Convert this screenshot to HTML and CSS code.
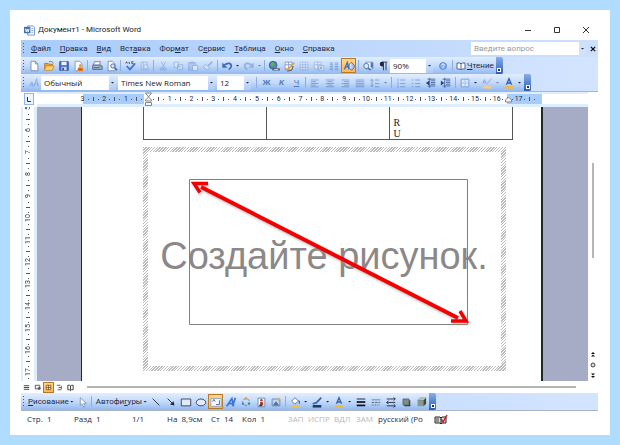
FILE: index.html
```html
<!DOCTYPE html>
<html lang="ru">
<head>
<meta charset="utf-8">
<title>Документ1 - Microsoft Word</title>
<link rel="stylesheet" href="styles.css">
</head>
<body>
<main class="window">
  <header class="title">
    <svg class="logo" viewBox="0 0 12 12"><path d="M4 1h6l1.500 1.500V11H4z" fill="#fff" stroke="#6d8fc9"/><path d="M8 4h2M8 6h2M8 8h2" stroke="#7f9fd6"/><path d="M0 2h7v7H0z" fill="#3f6fbd"/><path d="M1.500 4l1 3.500 1-3 1 3 1-3.500" fill="none" stroke="#fff"/></svg>
    <h1>Документ1 - Microsoft Word</h1>
    <div class="controls">
      <button aria-label="Свернуть"><svg viewBox="0 0 8 8"><path d="M1 4.500h6"/></svg></button>
      <button aria-label="Развернуть"><svg viewBox="0 0 8 8"><path d="M1.500 1.500h5v5h-5z"/></svg></button>
      <button aria-label="Закрыть"><svg viewBox="0 0 8 8"><path d="M1 1l6 6M7 1L1 7"/></svg></button>
    </div>
  </header>

  <nav class="menu">
    <i class="grip"></i>
    <button><u>Ф</u>айл</button><button><u>П</u>равка</button><button><u>В</u>ид</button><button>Вст<u>а</u>вка</button><button>Фор<u>м</u>ат</button><button>С<u>е</u>рвис</button><button><u>Т</u>аблица</button><button><u>О</u>кно</button><button><u>С</u>правка</button>
    <div class="ask"><input type="text" placeholder="Введите вопрос" aria-label="Введите вопрос"><button aria-label="Список вопросов"><i class="tri"></i></button></div>
    <button class="doc-close" aria-label="Закрыть окно"><svg viewBox="0 0 7 7"><path d="M1 1l5 5M6 1L1 6" stroke="#111" stroke-width="1.500"/></svg></button>
  </nav>

  <div class="dock">
    <div class="bar">
      <i class="grip"></i>
      <button class="ic" aria-label="Создать"><svg viewBox="0 0 14 14"><path d="M3.500 1.500h5l3 3v8h-8z" fill="#fff" stroke="#6e87b5"/><path d="M8.500 1.500v3h3" fill="none" stroke="#6e87b5"/></svg></button>
      <button class="ic" aria-label="Открыть"><svg viewBox="0 0 14 14"><path d="M2 4h4l1 1h4v6H2z" fill="#e9a336" stroke="#b3731c"/><path d="M1.500 12l2.500-5h9l-2.500 5z" fill="#ffdc7b" stroke="#c98a27"/><path d="M7 2c3-1 4 0 5 2" fill="none" stroke="#8d6d3a"/></svg></button>
      <button class="ic" aria-label="Сохранить"><svg viewBox="0 0 14 14"><path d="M2 2h10v10H2z" fill="#4d72c4" stroke="#2b4a94"/><path d="M4 2h6v4H4z" fill="#e8f0ff"/><path d="M4 8h6v4H4z" fill="#c5d4ef"/><path d="M5 9h2v3H5z" fill="#334f8f"/></svg></button>
      <button class="ic" aria-label="Разрешения"><svg viewBox="0 0 14 14"><path d="M2.500 1.500h5l3 3v8h-8z" fill="#fff" stroke="#7e93bd"/><path d="M5 13c0-4 1-5 3.500-5s3.500 1 4 5z" fill="#f2a22e"/><circle cx="8.500" cy="6.500" r="1.500" fill="#e08a2a"/><path d="M6 11h5" stroke="#d9382a" stroke-width="2"/></svg></button>
      <i class="sep"></i>
      <button class="ic" aria-label="Печать"><svg viewBox="0 0 14 14"><path d="M4 2h7l-1 4H3z" fill="#fff" stroke="#68789b"/><path d="M2 6h9l2 1v4H2z" fill="#a9b6d2" stroke="#4b5f8a"/><path d="M3 9h7" stroke="#45557c"/><path d="M10 8h2" stroke="#37a34a"/></svg></button>
      <button class="ic" aria-label="Просмотр"><svg viewBox="0 0 14 14"><path d="M2.500 1.500h5l3 3v8h-8z" fill="#fff" stroke="#7089b8"/><circle cx="8" cy="7" r="2.500" fill="#cfe2fb" stroke="#45608f"/><path d="M10 9l3 3" stroke="#45608f" stroke-width="1.500"/></svg></button>
      <i class="sep"></i>
      <button class="ic" aria-label="Орфография"><svg viewBox="0 0 14 14"><path d="M2 4l1-2 1 2M6 2v2h1M11 2H9v2h2" fill="none" stroke="#445"/><path d="M3 7l4 4 6-7" fill="none" stroke="#3b72d9" stroke-width="2"/></svg></button>
      <button class="ic off" aria-label="Справочник"><svg viewBox="0 0 14 14"><path d="M2.500 2.500h7v9h-7zM5 2v9" fill="#dce8fb" stroke="#718fc5"/><circle cx="8" cy="8" r="2.500" fill="#eaf2ff" stroke="#718fc5"/><path d="M10 10l2 2" stroke="#718fc5"/></svg></button>
      <i class="sep"></i>
      <button class="ic off" aria-label="Вырезать"><svg viewBox="0 0 14 14"><path d="M5 2l4 7M10 2L6 9" stroke="#5d80bd"/><circle cx="5" cy="10.500" r="1.500" fill="none" stroke="#5d80bd"/><circle cx="9" cy="10.500" r="1.500" fill="none" stroke="#5d80bd"/></svg></button>
      <button class="ic off" aria-label="Копировать"><svg viewBox="0 0 14 14"><path d="M2.500 2.500h5v6h-5zM6.500 5.500h6v6h-6z" fill="#eef5ff" stroke="#6485c2"/><path d="M8 7.500h3M8 9.500h3" stroke="#8aa5d6"/></svg></button>
      <button class="ic off" aria-label="Вставить"><svg viewBox="0 0 14 14"><path d="M2 3h8v9H2z" fill="#9bb6e3" stroke="#6485c2"/><path d="M4 2h4v2H4z" fill="#6485c2"/><path d="M6.500 6.500h6v6h-6z" fill="#fff" stroke="#6485c2"/></svg></button>
      <button class="ic off" aria-label="Формат по образцу"><svg viewBox="0 0 14 14"><path d="M12 2L7 7" stroke="#6485c2" stroke-width="2"/><path d="M4 5l5 4-3 3-4-4z" fill="#eef5ff" stroke="#6485c2"/></svg></button>
      <i class="sep wide"></i>
      <button class="ic" aria-label="Отменить"><svg viewBox="0 0 14 14"><path d="M4 6c3-3 8-3 8 1 0 2-1 3-3 4" fill="none" stroke="#3e6cc4" stroke-width="2"/><path d="M1.500 3v6h6z" fill="#3e6cc4"/></svg></button>
      <button class="drop" aria-label="Список отмены"><i class="tri"></i></button>
      <button class="ic off" aria-label="Вернуть"><svg viewBox="0 0 14 14"><path d="M10 6c-3-3-8-3-8 1 0 2 1 3 3 4" fill="none" stroke="#6485c2" stroke-width="2"/><path d="M12.500 3v6h-6z" fill="#6485c2"/></svg></button>
      <button class="drop off" aria-label="Список возврата"><i class="tri"></i></button>
      <i class="sep"></i>
      <button class="ic" aria-label="Гиперссылка"><svg viewBox="0 0 14 14"><circle cx="6" cy="6" r="4.500" fill="#4b82c9" stroke="#2d5592"/><path d="M3 4l3-2 2 3-3 3-2-2zM8 7l2-1-1 3z" fill="#62b25a"/><path d="M6 11h3M9 11h4" stroke="#555f70" stroke-width="2.500" stroke-linecap="round"/><path d="M7 11h5" stroke="#dde5f0"/></svg></button>
      <button class="ic" aria-label="Таблицы и границы"><svg viewBox="0 0 14 14"><path d="M2.500 2.500h8v9h-8zM2.500 5.500h8M6.500 2.500v9" fill="#fff" stroke="#8497ba"/><path d="M13 3L7 10l-4 1" fill="none" stroke="#e0a13b" stroke-width="2"/><path d="M12 7l-2 5-5 1" fill="none" stroke="#594737"/></svg></button>
      <button class="ic off" aria-label="Добавить таблицу"><svg viewBox="0 0 14 14"><path d="M2.500 2.500h9v9h-9zM2.500 5.500h9M2.500 8.500h9M5.500 2.500v9M8.500 2.500v9" fill="#fff" stroke="#7390c6"/></svg></button>
      <button class="ic off" aria-label="Лист Excel"><svg viewBox="0 0 14 14"><path d="M1.500 2.500h8v8h-8zM1.500 5.500h8M5.500 2.500v8M6.500 6.500h6v6h-6z" fill="#fff" stroke="#7390c6"/><path d="M8 8l3 3M11 8l-3 3" stroke="#5277bb"/></svg></button>
      <button class="ic off" aria-label="Колонки"><svg viewBox="0 0 14 14"><path d="M2 3.500h4M2 5.500h4M2 7.500h4M2 9.500h4M2 11.500h4M8 3.500h4M8 5.500h4M8 7.500h4M8 9.500h4M8 11.500h4" stroke="#2f5aa8"/></svg></button>
      <button class="ic on" aria-label="Панель рисования"><svg viewBox="0 0 14 14"><path d="M1.500 11L5 3l2 8M3 8h4" fill="none" stroke="#3670cf" stroke-width="1.500"/><path d="M7 5l3-2 3 3v3l-3 3-3-3z" fill="#a9c3ed" stroke="#4465a5"/><path d="M9 4v6" stroke="#fff"/></svg></button>
      <i class="sep wide"></i>
      <button class="ic" aria-label="Схема документа"><svg viewBox="0 0 14 14"><path d="M4.500 2.500h8v8h-8z" fill="#fff" stroke="#7490c0"/><path d="M10 3h3v6h-3z" fill="#5275b5"/><circle cx="5" cy="7" r="3" fill="#dce9fb" stroke="#4c6da8"/><path d="M7 9l3 3" stroke="#4c6da8" stroke-width="1.500"/></svg></button>
      <button class="ic" aria-label="Непечатаемые знаки"><svg viewBox="0 0 14 14"><path d="M7.500 3v9M10.500 3v9M6 2.500h6" stroke="#1b2433"/><path d="M7.500 2H6a2.500 2.500 0 0 0 0 5.500h1.500z" fill="#1b2433"/></svg></button>
      <div class="combo c-zoom"><select aria-label="Масштаб"><option>90%</option></select><i class="arr"><i class="tri"></i></i></div>
      <button class="ic" aria-label="Справка Word"><svg viewBox="0 0 14 14"><circle cx="7" cy="7" r="4" fill="#86aef0" stroke="#4c7fd6"/><path d="M5.500 6c0-2 3-2 3 0 0 1-1.500 1-1.500 2.500M7 9v1" fill="none" stroke="#fff"/></svg></button>
      <i class="sep wide"></i>
      <button class="txt"><svg viewBox="0 0 10 10"><path d="M1 2h3l1 1 1-1h3v6H6L5 9 4 8H1zM5 3v6" fill="#fff" stroke="#56688c"/></svg><span><u>Ч</u>тение</span></button>
      <button class="cap" aria-label="Параметры панели"><i></i></button>
    </div>

    <div class="bar">
      <i class="grip"></i>
      <button class="ic off" aria-label="Стили"><svg viewBox="0 0 14 14"><path d="M2 11l2.500-5L6 11M3 9h3M7 11l3-9 2 9M8 8h4" fill="none" stroke="#4a73bd"/></svg></button>
      <div class="combo c-style"><select aria-label="Стиль"><option>Обычный</option></select><i class="arr"><i class="tri"></i></i></div>
      <div class="combo c-font"><select aria-label="Шрифт"><option>Times New Roman</option></select><i class="arr"><i class="tri"></i></i></div>
      <div class="combo c-size"><select aria-label="Размер"><option>12</option></select><i class="arr"><i class="tri"></i></i></div>
      <i class="sep six"></i>
      <button class="ic letter"><b>Ж</b></button><button class="ic letter"><em>К</em></button><button class="ic letter"><u>Ч</u></button>
      <i class="sep"></i>
      <button class="ic off" aria-label="По левому краю"><svg viewBox="0 0 14 14"><path d="M2 3.500h9M2 5.500h6M2 7.500h9M2 9.500h6M2 11.500h9" stroke="#2f5aa8"/></svg></button>
      <button class="ic off" aria-label="По центру"><svg viewBox="0 0 14 14"><path d="M2 3.500h10M4 5.500h6M2 7.500h10M4 9.500h6M2 11.500h10" stroke="#2f5aa8"/></svg></button>
      <button class="ic off" aria-label="По правому краю"><svg viewBox="0 0 14 14"><path d="M3 3.500h9M6 5.500h6M3 7.500h9M6 9.500h6M3 11.500h9" stroke="#2f5aa8"/></svg></button>
      <button class="ic off" aria-label="По ширине"><svg viewBox="0 0 14 14"><path d="M2 3.500h10M2 5.500h10M2 7.500h10M2 9.500h10M2 11.500h10" stroke="#2f5aa8"/></svg></button>
      <button class="ic off" aria-label="Интервал"><svg viewBox="0 0 14 14"><path d="M3.500 3v8M2 4.500l1.500-2 1.500 2M2 9.500l1.500 2 1.500-2M7 3.500h5M7 7.500h5M7 11.500h5" fill="none" stroke="#2f5aa8"/></svg></button>
      <button class="drop off" aria-label="Список интервалов"><i class="tri"></i></button>
      <i class="sep wide"></i>
      <button class="ic off" aria-label="Нумерация"><svg viewBox="0 0 14 14"><path d="M3.500 2v3M3.500 6v3M3.500 10v3M6 3.500h6M6 7.500h6M6 11.500h6" stroke="#2f5aa8"/></svg></button>
      <button class="ic off" aria-label="Маркеры"><svg viewBox="0 0 14 14"><path d="M2 3.500h2M2 7.500h2M2 11.500h2M6 3.500h6M6 7.500h6M6 11.500h6" stroke="#2f5aa8"/></svg></button>
      <button class="ic" aria-label="Уменьшить отступ"><svg viewBox="0 0 14 14"><path d="M3 2.500h9M7 4.500h5M7 6.500h5M7 8.500h5M3 10.500h9M5.500 1v12" stroke="#3f5f96"/><path d="M1 7l4-3v6z" fill="#1b4596"/></svg></button>
      <button class="ic" aria-label="Увеличить отступ"><svg viewBox="0 0 14 14"><path d="M3 2.500h9M7 4.500h5M7 6.500h5M7 8.500h5M3 10.500h9M5.500 1v12" stroke="#3f5f96"/><path d="M5 7L1 4v6z" fill="#1b4596"/></svg></button>
      <i class="sep wide"></i>
      <button class="ic" aria-label="Границы"><svg viewBox="0 0 14 14"><path d="M2.500 2.500h9v9h-9z" fill="#dce9fc" stroke="#7195d6"/><path d="M7 3v8M3 7h8" stroke="#7195d6" stroke-dasharray="1 1"/></svg></button>
      <button class="drop" aria-label="Список границ"><i class="tri"></i></button>
      <button class="ic" aria-label="Выделение цветом"><svg viewBox="0 0 14 14"><path d="M2 8l2-5 2 5M3 6h3M7 8l5-6" fill="none" stroke="#86a4d4"/><path d="M2 12h10" stroke="#f0cd8a" stroke-width="3"/></svg></button>
      <button class="drop off" aria-label="Цвета выделения"><i class="tri"></i></button>
      <button class="ic" aria-label="Цвет шрифта"><svg viewBox="0 0 14 14"><path d="M4 9l3-7 3 7M5 7h4" fill="none" stroke="#3360ae" stroke-width="1.500"/><path d="M2 12h10" stroke="#f7b83e" stroke-width="3"/></svg></button>
      <button class="drop" aria-label="Цвета шрифта"><i class="tri"></i></button>
      <button class="cap" aria-label="Параметры панели"><i></i></button>
    </div>
  </div>

  <div class="ruler">
    <button class="tab" aria-label="Табуляция"><svg viewBox="0 0 8 8"><path d="M2.500 2v4.500H6" fill="none" stroke="#333"/></svg></button>
    <div class="scale"><div class="marks"><span>3</span><span>2</span><span>1</span><span></span><span>1</span><span>2</span><span>3</span><span>4</span><span>5</span><span>6</span><span>7</span><span>8</span><span>9</span><span>10</span><span>11</span><span>12</span><span>13</span><span>14</span><span>15</span><span>16</span><span>17</span>
      <svg class="indent first" viewBox="0 0 9 14"><path d="M1.500 1h6L4.500 5zM4.500 5l3 3v1h-6V8zM1.500 10.500h6v3h-6z" fill="#f4f4f4" stroke="#888"/></svg>
      <svg class="indent last" viewBox="0 0 9 14"><path d="M4.500 5l3 3v2h-6V8z" fill="#f4f4f4" stroke="#888"/></svg></div></div>
  </div>

  <section class="work">
    <div class="vruler"><span>5</span><span>6</span><span>7</span><span>8</span><span>9</span><span>10</span><span>11</span><span>12</span><span>13</span><span>14</span><span>15</span><span>16</span><span>17</span></div>
    <div class="desk">
      <article class="page">
        <table><tbody><tr><td></td><td></td><td>R<br>U</td></tr></tbody></table>
        <div class="canvas">
          <p>Создайте рисунок.</p>
          <svg class="shape" viewBox="0 0 364 224">
            <path d="M46.500 32.500h278v145h-278z" fill="none" stroke="#857f7f"/>
            <g class="arrow" fill="none" stroke="#f50000"><path d="M58 40L315 171" stroke-width="4"/><path d="M65 36.500H51l6 9M317 164l6 10h-15" stroke-width="3.500"/></g>
          </svg>
        </div>
      </article>
    </div>
    <div class="vscroll"><i class="thumb"></i>
      <button aria-label="Предыдущая"><svg viewBox="0 0 6 6"><path d="M1 3l2-2 2 2zM1 5.500l2-2 2 2z" fill="#111"/></svg></button>
      <button aria-label="Выбор объекта"><svg viewBox="0 0 6 6"><circle cx="3" cy="3" r="2" fill="#ddd" stroke="#444"/></svg></button>
      <button aria-label="Следующая"><svg viewBox="0 0 6 6"><path d="M1 .5l2 2 2-2zM1 3l2 2 2-2z" fill="#111"/></svg></button>
    </div>
  </section>

  <div class="views">
    <button aria-label="Обычный"><svg viewBox="0 0 10 10"><path d="M2 3h6M2 5h6M2 7h6" stroke="#333"/></svg></button>
    <button aria-label="Веб-документ"><svg viewBox="0 0 10 10"><path d="M2.500 2.500h5v4h-5z" fill="#eee" stroke="#555"/><circle cx="7" cy="6" r="1.500" fill="#555"/></svg></button>
    <button class="on" aria-label="Разметка"><svg viewBox="0 0 10 10"><path d="M2.500 2.500h5v5h-5zM2.500 5h5M5 2.500v5" fill="#ffe9b5" stroke="#8a5d24"/></svg></button>
    <button aria-label="Структура"><svg viewBox="0 0 10 10"><path d="M2 2.500h4M4 5h3M3 7.500h4M7 3v4" stroke="#555"/></svg></button>
    <button aria-label="Чтение"><svg viewBox="0 0 10 10"><path d="M2 2.500h2l1 1 1-1h2v5H6l-1 1-1-1H2zM5 3v5" fill="none" stroke="#333"/></svg></button>
    <i class="hscroll"></i>
  </div>

  <div class="dock draw">
    <div class="bar">
      <i class="grip"></i>
      <button class="txt"><span><u>Р</u>исование</span><i class="tri"></i></button>
      <button class="ic" aria-label="Выбор объектов"><svg viewBox="0 0 14 14"><path d="M5 2v9l2-2 2 4 1.500-1L9 8.500h3z" fill="#fff" stroke="#8093b5"/></svg></button>
      <i class="sep wide"></i>
      <button class="txt"><span>Автофи<u>г</u>уры</span><i class="tri"></i></button>
      <button class="ic" aria-label="Линия"><svg viewBox="0 0 14 14"><path d="M3 3l8 8" stroke="#223"/></svg></button>
      <button class="ic" aria-label="Стрелка"><svg viewBox="0 0 14 14"><path d="M3 3l6 6" stroke="#223"/><path d="M11 11L6 10l4-4z" fill="#223"/></svg></button>
      <button class="ic" aria-label="Прямоугольник"><svg viewBox="0 0 14 14"><path d="M1.500 3.500h11v8h-11z" fill="#dfebfd" stroke="#334"/></svg></button>
      <button class="ic" aria-label="Овал"><svg viewBox="0 0 14 14"><ellipse cx="7" cy="7.500" rx="5.500" ry="4" fill="#dfebfd" stroke="#334"/></svg></button>
      <button class="ic on" aria-label="Надпись"><svg viewBox="0 0 14 14"><path d="M1 3h12v9H1z" fill="#f6faff" stroke="#8aa0c8"/><path d="M3 6.500L4.500 4 6 6.500M7 10h4M11 5v5" fill="none" stroke="#355aa0"/></svg></button>
      <button class="ic" aria-label="WordArt"><svg viewBox="0 0 14 14"><path d="M2 12l6-9 2 9M5 9h5M9 12l3-10" fill="none" stroke="#3a76d8" stroke-width="2"/></svg></button>
      <button class="ic" aria-label="Схема"><svg viewBox="0 0 14 14"><circle cx="7" cy="7" r="4" fill="none" stroke="#5573a8" stroke-dasharray="3 2"/><circle cx="7" cy="3" r="1.500" fill="#e69b3e"/><circle cx="3.500" cy="9" r="1.500" fill="#5986cf"/><circle cx="10.500" cy="9" r="1.500" fill="#4b9c62"/></svg></button>
      <button class="ic" aria-label="Картинка"><svg viewBox="0 0 14 14"><path d="M3.500 2.500h8v10h-8z" fill="#fff" stroke="#667da7"/><circle cx="7.500" cy="5" r="1.500" fill="#c33b2d"/><path d="M6 7h3l1 4H6z" fill="#b93228"/><path d="M5 10h3v2H5z" fill="#333"/></svg></button>
      <button class="ic" aria-label="Рисунок"><svg viewBox="0 0 14 14"><path d="M2.500 3.500h9v8h-9z" fill="#b9d6fb" stroke="#6680b0"/><path d="M3 11l4-5 4 5z" fill="#54749f"/><path d="M10 2v4M8 4h4" stroke="#e7ad3a"/></svg></button>
      <i class="sep wide"></i>
      <button class="ic" aria-label="Цвет заливки"><svg viewBox="0 0 14 14"><path d="M3 6l4-4 4 4-4 3.500z" fill="#fff" stroke="#4e6ea8"/><path d="M11 6c2 0 1 2 1 3" fill="none" stroke="#3668bd" stroke-width="1.500"/><path d="M2 12h10" stroke="#f7bd4a" stroke-width="3"/></svg></button>
      <button class="drop" aria-label="Цвета заливки"><i class="tri"></i></button>
      <button class="ic" aria-label="Цвет линий"><svg viewBox="0 0 14 14"><path d="M12 2L6 8l-4 1" fill="none" stroke="#3c64ad" stroke-width="2"/><path d="M2 12h10" stroke="#203a66" stroke-width="3"/></svg></button>
      <button class="drop" aria-label="Цвета линий"><i class="tri"></i></button>
      <button class="ic" aria-label="Цвет шрифта"><svg viewBox="0 0 14 14"><path d="M4 9l3-7 3 7M5 7h4" fill="none" stroke="#3360ae" stroke-width="1.500"/><path d="M2 12h10" stroke="#f7b83e" stroke-width="3"/></svg></button>
      <button class="drop" aria-label="Цвета текста"><i class="tri"></i></button>
      <button class="ic" aria-label="Тип линии"><svg viewBox="0 0 14 14"><path d="M2 3.500h10" stroke="#112"/><path d="M2 7h10" stroke="#112" stroke-width="2"/><path d="M2 11h10" stroke="#112" stroke-width="2"/></svg></button>
      <button class="ic" aria-label="Тип штриха"><svg viewBox="0 0 14 14"><path d="M2 4.500h10" stroke="#678"/><path d="M2 7.500h10" stroke="#456" stroke-dasharray="3 1"/><path d="M2 10.500h10" stroke="#456" stroke-dasharray="1 1"/></svg></button>
      <button class="ic" aria-label="Вид стрелки"><svg viewBox="0 0 14 14"><path d="M2 3.500h10M2 7.500h10M2 11.500h10M10 1.500l2 2-2 2M4 5.500l-2 2 2 2M10 9.500l2 2-2 2" fill="none" stroke="#223"/></svg></button>
      <button class="ic" aria-label="Тень"><svg viewBox="0 0 14 14"><path d="M5 5h7v7H5z" fill="#334"/><path d="M3.500 3.500h7v7h-7z" fill="#7d8c84" stroke="#56655e"/></svg></button>
      <button class="ic" aria-label="Объем"><svg viewBox="0 0 14 14"><path d="M3 5l3-3h7v7l-3 3z" fill="#3c4a43"/><path d="M3 5h7v7H3z" fill="#899990"/><path d="M3 5l3-3h7l-3 3z" fill="#b5c2bb"/></svg></button>
      <button class="cap" aria-label="Параметры панели"><i></i></button>
    </div>
  </div>

  <footer class="status">
    <span>Стр.&nbsp; 1</span><span>Разд&nbsp; 1</span><span>1/1</span><span>На&nbsp; 8,9см</span><span>Ст&nbsp; 14</span><span>Кол&nbsp; 1</span><span class="dim">ЗАП</span><span class="dim">ИСПР</span><span class="dim">ВДЛ</span><span class="dim">ЗАМ</span><span>русский (Ро</span>
    <svg viewBox="0 0 14 10"><path d="M1 3h5l1 1 1-1h4v6H8L7 10 6 9H1zM7 4v5" fill="#ddd" stroke="#222"/><path d="M2 5h3M2 7h3" stroke="#444"/><path d="M7 5l2 3 4-7" fill="none" stroke="#c8202a" stroke-width="1.500"/></svg>
  </footer>
</main>
</body>
</html>
```
FILE: styles.css
```css
* { box-sizing: border-box; }

body {
  margin: 0;
  padding: 10px;
  min-height: 100vh;
  display: flex;
  background: #b0dcff;
  color: #1e2a44;
  font: 8px/10px Roboto, "Noto Sans", sans-serif;
}

button, input, select {
  margin: 0;
  padding: 0;
  border: 0;
  background: none;
  color: inherit;
  font: inherit;
}

svg { display: block; }

u { text-underline-offset: 1px; }

.window {
  flex: 1;
  display: flex;
  flex-direction: column;
  padding: 10px 12px 8px 11px;
  background: #fff;
}

/* Title */
.title {
  display: flex;
  align-items: center;
  height: 20px;
  padding-left: 3px;
}

.logo { width: 11px; height: 11px; }

.title h1 {
  flex: 1;
  margin: 0 0 0 3px;
  font-size: 8px;
  font-weight: 400;
  color: #222;
}

.controls { display: flex; gap: 21px; padding-right: 8px; }
.controls svg { width: 8px; height: 8px; fill: none; stroke: #333; }

/* Menu */
.menu {
  display: flex;
  align-items: center;
  height: 17px;
  padding-left: 2px;
  background: linear-gradient(90deg, #a9ccfb, #cde0fd);
}

.menu > button { padding: 0 4px 0 5px; }

.grip {
  flex: none;
  width: 3px;
  height: 11px;
  background: repeating-linear-gradient(#3d5f9f 0 1px, transparent 1px 3px) 0 0 / 1px 100% no-repeat;
}

.ask {
  display: flex;
  width: 115px;
  height: 13px;
  margin-left: auto;
  background: #fff;
}

.ask input {
  flex: 1;
  min-width: 0;
  padding-left: 3px;
}

.ask input::placeholder { color: #999; opacity: 1; }
.ask button { width: 7px; background: #cfe1fb; }
.menu > .doc-close { padding: 0 2px 0 4px; }
.doc-close svg { width: 6px; height: 6px; }

.tri {
  display: block;
  width: 4px;
  height: 2px;
  margin: 0 auto;
  background: #223;
  clip-path: polygon(0 0, 100% 0, 50% 100%);
}

/* Toolbars */
.dock {
  background: linear-gradient(90deg, #b6d3fc, #d3e4ff);
  border-bottom: 1px solid #a9b6c9;
}

.bar {
  display: flex;
  align-items: center;
  width: max-content;
  height: 17px;
  padding-left: 2px;
  background: linear-gradient(#e2eefe, #c3dafb 50%, #93b9f0);
}

.ic {
  flex: none;
  display: grid;
  place-items: center;
  width: 15px;
  height: 15px;
}

.ic svg { width: 12px; height: 12px; }
.off { opacity: .5; }

.on {
  border: 1px solid #b5792a;
  background: linear-gradient(#ffd58c, #ffb555);
}

.drop { flex: none; width: 7px; height: 15px; }

.sep {
  flex: none;
  width: 3px;
  height: 11px;
  background: linear-gradient(#8cadde, #8cadde) center / 1px 100% no-repeat;
}

.sep.wide { width: 4px; }
.sep.six { width: 6px; }

.combo {
  display: flex;
  position: relative;
  height: 14px;
  margin-right: 2px;
  background: #fff;
}

.combo select {
  flex: 1;
  min-width: 0;
  padding: 0 8px 0 3px;
  appearance: none;
  color: #222;
  font-family: "Open Sans", sans-serif;
}

.arr {
  position: absolute;
  inset: 0 0 0 auto;
  display: grid;
  place-items: center;
  width: 7px;
  background: linear-gradient(#dceafd, #aecbf6);
  pointer-events: none;
}

.c-zoom { width: 43px; }
.c-style { width: 75px; }
.c-font { width: 97px; }
.c-size { width: 34px; }

.letter { color: #5479bf; }
.letter em { font-weight: 700; }

.txt {
  display: flex;
  align-items: center;
  gap: 1px;
  padding: 0 1px 0 2px;
}

.txt svg { width: 10px; height: 10px; }

.cap {
  align-self: stretch;
  width: 7px;
  margin-left: 1px;
  background: linear-gradient(#88aeea, #2c5cb5);
  border-radius: 0 2px 2px 0;
}

.cap i {
  display: block;
  width: 4px;
  height: 4px;
  margin: 8px auto 0;
  border: 1px solid #fff;
  background: #1c3566;
}

/* Rulers */
.ruler { display: flex; height: 15px; }

.tab {
  flex: none;
  width: 10px;
  height: 12px;
  margin: 1px 3px 0;
  border: 1px solid #8fb6ee;
  background: #eef5ff;
}

.scale {
  flex: 1;
  display: flex;
  justify-content: center;
  margin-right: 10px;
  border: solid #dfeefe;
  border-width: 2px 0 3px;
}

.marks {
  position: relative;
  display: grid;
  grid-template-columns: repeat(21, 1fr);
  width: 470px;
  padding-right: 12px;
  background: linear-gradient(90deg, transparent 5px, #a9cdfb 5px 66px, #fff 66px 429px, #a9cdfb 429px 464px, transparent 464px);
}

.marks span {
  display: flex;
  justify-content: center;
  padding-right: 12px;
  background:
    linear-gradient(#555, #555) 10px 50% / 1px 1px no-repeat,
    linear-gradient(#555, #555) 15px 50% / 1px 4px no-repeat,
    linear-gradient(#555, #555) 20px 50% / 1px 1px no-repeat;
  font-size: 7px;
}

.indent { position: absolute; top: -2px; width: 9px; height: 14px; }
.first { left: 66px; }
.last { left: 426px; }

.work { flex: 1; display: flex; min-height: 274px; }

.vruler {
  flex: none;
  width: 16px;
  height: 274px;
  border: solid #dfeefe;
  border-width: 0 3px 0 2px;
  overflow: hidden;
}

.vruler span {
  display: block;
  height: 22px;
  padding-top: 13px;
  writing-mode: vertical-rl;
  transform: rotate(180deg);
  background:
    linear-gradient(#555, #555) 50% 11px / 1px 1px no-repeat,
    linear-gradient(#555, #555) 50% 6px / 4px 1px no-repeat,
    linear-gradient(#555, #555) 50% 1px / 1px 1px no-repeat;
  font-size: 7px;
  line-height: 11px;
  text-align: center;
}

.vruler span:first-child { margin-top: -3px; }

.desk {
  flex: 1;
  display: flex;
  justify-content: center;
  padding-right: 2px;
  background: #a6abc6;
}

.page {
  width: 462px;
  padding: 0 30px 0 61px;
  background: #fff;
  border: solid #1f2a28;
  border-width: 0 2px 0 1px;
}

.page table {
  width: 370px;
  border-collapse: collapse;
  table-layout: fixed;
  color: #222;
  font: 10px/11px "Liberation Serif", serif;
}

.page td {
  height: 32px;
  padding: 0 4px;
  border: solid #555;
  border-width: 0 1px 1px;
  vertical-align: bottom;
}

.canvas {
  position: relative;
  display: grid;
  place-items: center;
  width: 363px;
  height: 224px;
  margin-top: 7px;
  padding-bottom: 6px;
  border: 5px solid transparent;
  background:
    linear-gradient(#fff, #fff) padding-box,
    repeating-linear-gradient(135deg, #bbb 0 1px, #fff 1px 2px) border-box;
}

.canvas p {
  margin: 0;
  color: #8c8888;
  font: 38px/44px "Liberation Sans", sans-serif;
  white-space: nowrap;
}

.shape {
  position: absolute;
  left: -5px;
  top: -5px;
  width: 364px;
  height: 224px;
}

.arrow { filter: drop-shadow(1px 2px 1px #9998); }

.vscroll {
  display: flex;
  flex-direction: column;
  align-items: center;
  gap: 5px;
  width: 10px;
  padding-bottom: 2px;
}

.vscroll svg { width: 6px; height: 6px; }

.thumb {
  width: 2px;
  height: 95px;
  margin: 56px 0 auto;
  background: #b9b5b2;
}

/* View switch and drawing bar */
.views { display: flex; align-items: center; height: 12px; }
.views button { width: 11px; height: 11px; display: grid; place-items: center; }
.views svg { width: 9px; height: 9px; }

.hscroll {
  flex: 1;
  height: 2px;
  margin: 0 22px 0 11px;
  background: #b5b5b5;
}

.status {
  display: grid;
  grid-template-columns: 47px 58px 35px 44px 31px 46px 20px 26px 22px 22px 56px 14px;
  align-items: center;
  height: 16px;
  padding-left: 6px;
  font-family: "Open Sans", sans-serif;
}

.status svg { width: 14px; height: 10px; }
.dim { color: #b8b8b8; }
```
